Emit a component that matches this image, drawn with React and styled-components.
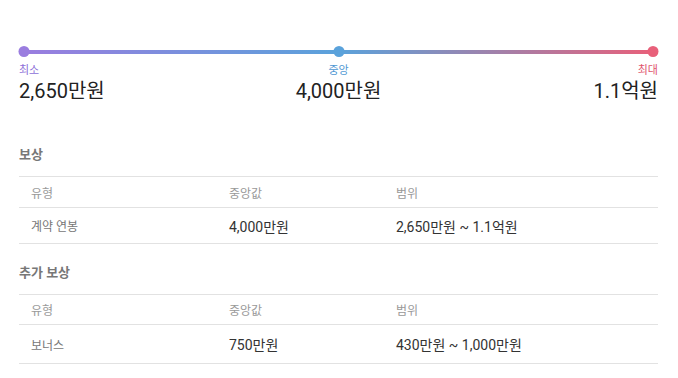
import React from 'react'
import styled, { createGlobalStyle } from 'styled-components'

const GlobalStyle = createGlobalStyle`
  body {
    margin: 0;
    background: #fff;
    font-family: Roboto, "Noto Sans CJK KR", sans-serif;
  }
`

const Page = styled.div`
  padding: 46px 20px 0 19px;
`

const Track = styled.div`
  position: relative;
  height: 12px;
  display: flex;
  align-items: center;
`

const Line = styled.div`
  flex: 1;
  height: 4px;
  margin: 0 5px;
  background: linear-gradient(90deg, #9a7ddf 0%, #5aa2db 50%, #e8607a 100%);
`

const Dot = styled.span`
  position: absolute;
  top: 0;
  left: ${({ $pos }) => $pos};
  width: 11px;
  height: 11px;
  border-radius: 50%;
  background: ${({ $color }) => $color};
  transform: translateX(-50%);
`

const Marks = styled.div`
  display: grid;
  grid-template-columns: 1fr 1fr 1fr;
  margin-top: 5px;
`

const Mark = styled.div`
  text-align: ${({ $align }) => $align};
`

const MarkLabel = styled.div`
  font-size: 11px;
  line-height: 16px;
  color: ${({ $color }) => $color};
`

const MarkValue = styled.div`
  font-size: 20px;
  line-height: 24px;
  color: #222;
`

const Section = styled.section`
  margin-top: ${({ $top }) => $top}px;
`

const SectionTitle = styled.h3`
  margin: 0 0 13px;
  font-size: 13px;
  line-height: 17px;
  font-weight: 700;
  color: #777;
`

const Row = styled.div`
  display: grid;
  grid-template-columns: 198px 167px 1fr;
  align-items: center;
  height: ${({ $h }) => $h}px;
  border-top: 1px solid #e2e2e2;
  &:last-child {
    border-bottom: 1px solid #e2e2e2;
  }
`

const Cell = styled.div`
  padding-left: 12px;
  font-size: ${({ $kind }) => ($kind === 'value' ? 14 : 12)}px;
  color: ${({ $kind }) => ($kind === 'head' ? '#999' : $kind === 'type' ? '#777' : '#333')};
`

const marks = [
  { label: '최소', value: '2,650만원', color: '#8e6fd8', align: 'left' },
  { label: '중앙', value: '4,000만원', color: '#4f97d3', align: 'center' },
  { label: '최대', value: '1.1억원', color: '#e0566f', align: 'right' },
]

const sections = [
  { title: '보상', top: 43, head: 30, body: 35, rows: [['계약 연봉', '4,000만원', '2,650만원 ~ 1.1억원']] },
  { title: '추가 보상', top: 20, head: 29, body: 38, rows: [['보너스', '750만원', '430만원 ~ 1,000만원']] },
]

const App = () => (
  <>
    <GlobalStyle />
    <Page>
      <Track>
        <Line />
        <Dot $pos="5px" $color="#9a7ddf" />
        <Dot $pos="50%" $color="#5aa2db" />
        <Dot $pos="calc(100% - 5px)" $color="#e8607a" />
      </Track>
      <Marks>
        {marks.map((m) => (
          <Mark key={m.label} $align={m.align}>
            <MarkLabel $color={m.color}>{m.label}</MarkLabel>
            <MarkValue>{m.value}</MarkValue>
          </Mark>
        ))}
      </Marks>
      {sections.map((s) => (
        <Section key={s.title} $top={s.top}>
          <SectionTitle>{s.title}</SectionTitle>
          <div>
            <Row $h={s.head}>
              <Cell $kind="head">유형</Cell>
              <Cell $kind="head">중앙값</Cell>
              <Cell $kind="head">범위</Cell>
            </Row>
            {s.rows.map((r) => (
              <Row key={r[0]} $h={s.body}>
                <Cell $kind="type">{r[0]}</Cell>
                <Cell $kind="value">{r[1]}</Cell>
                <Cell $kind="value">{r[2]}</Cell>
              </Row>
            ))}
          </div>
        </Section>
      ))}
    </Page>
  </>
)

export default App
